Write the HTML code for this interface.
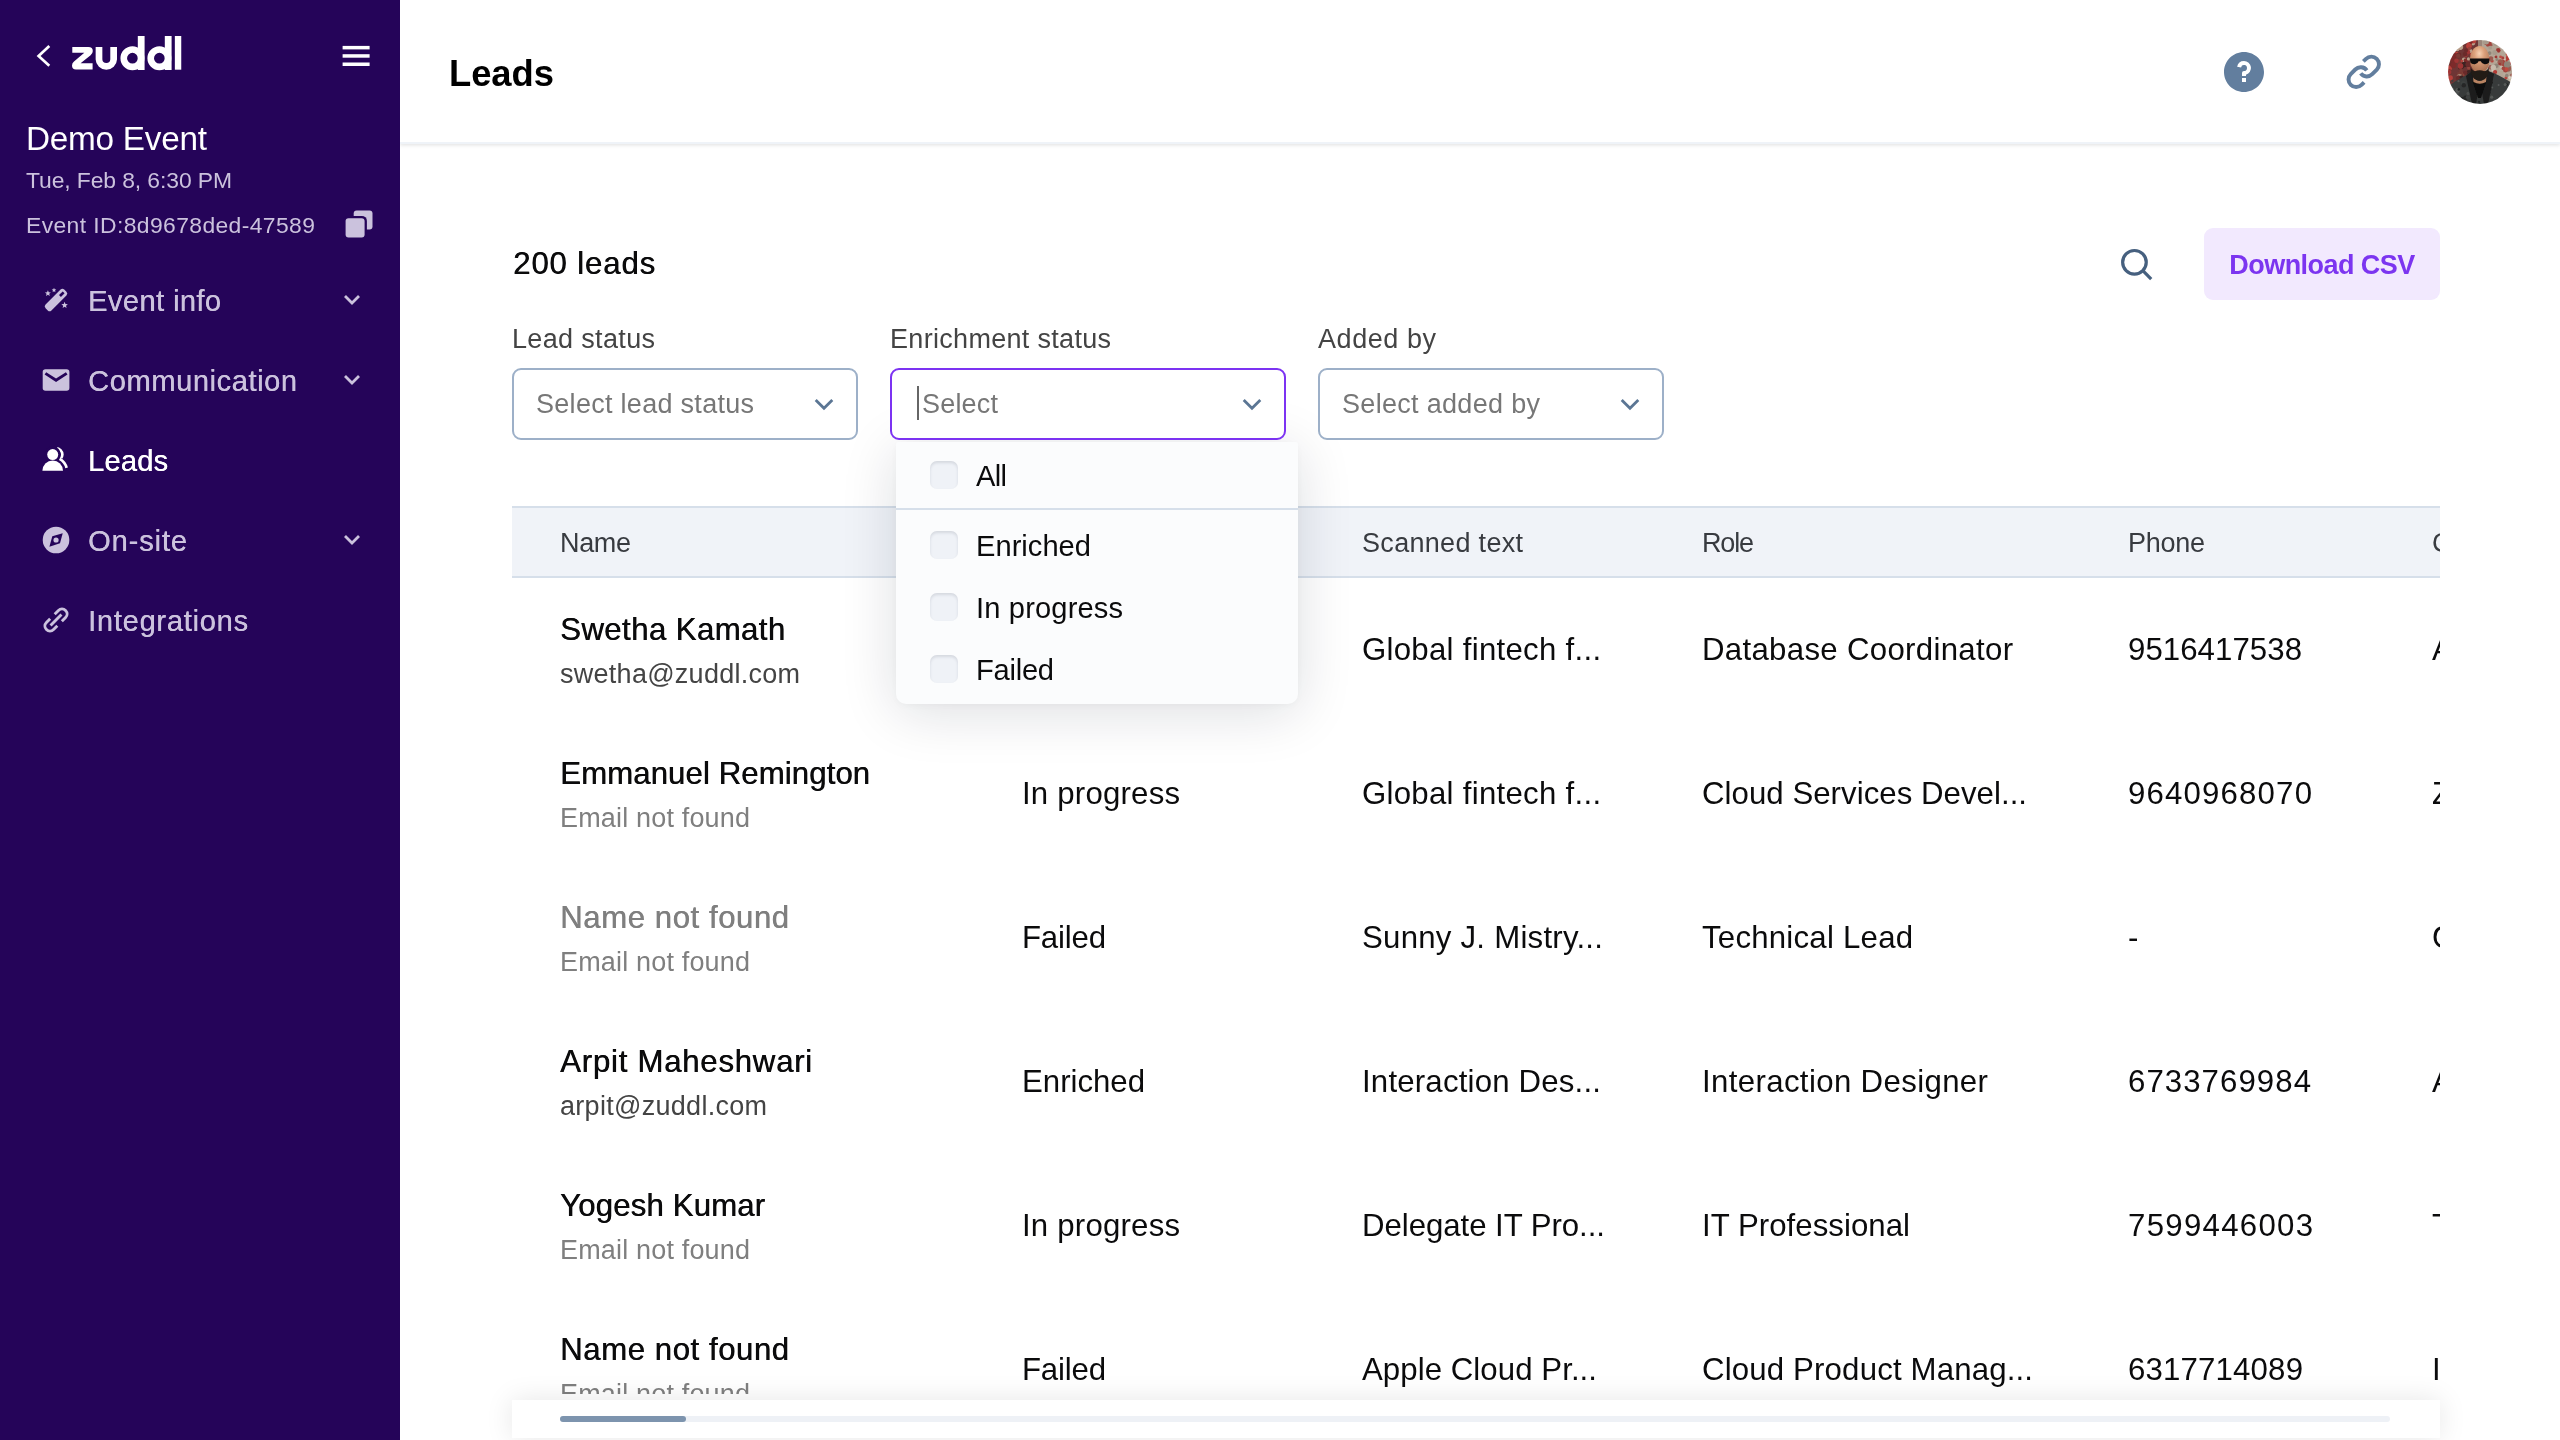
<!DOCTYPE html>
<html>
<head>
<meta charset="utf-8">
<title>Leads</title>
<style>
*{box-sizing:border-box;margin:0;padding:0}
html,body{width:2560px;height:1440px;overflow:hidden;background:#fff}
body{font-family:"Liberation Sans",sans-serif;color:#0b0b0c;position:relative}
.abs{position:absolute;white-space:nowrap;will-change:transform}
.sel span{will-change:transform}
/* sidebar */
#side{position:absolute;left:0;top:0;width:400px;height:1440px;background:#250459}
.ev1{left:26px;top:120px;font-size:33.3px;line-height:38px;color:#fff;letter-spacing:.3px}
.ev2{left:26px;top:167px;font-size:22.9px;line-height:26px;color:#cbc2dd;letter-spacing:.2px}
.ev3{left:26px;top:212px;font-size:22.9px;line-height:26px;color:#cbc2dd;letter-spacing:.2px}
.nav{text-shadow:0.3px 0 0 currentColor;left:88px;font-size:29.1px;line-height:34px;color:#cbc2dd;letter-spacing:.6px}
.nav.on{color:#fff}
.nico{position:absolute;left:40px;width:32px;height:32px}
.nchev{position:absolute;left:340px;width:24px;height:24px}
/* header */
#head{position:absolute;left:400px;top:0;width:2160px;height:144px;background:#fff;border-bottom:2px solid #eff3f8;box-shadow:0 1px 4px rgba(0,0,0,.13)}
.title{left:449px;top:53px;font-size:36.4px;line-height:42px;font-weight:bold;color:#000;letter-spacing:.2px}
/* content */
.count{text-shadow:0.5px 0 0 currentColor;left:513px;top:245.5px;font-size:31.2px;line-height:36px;color:#0b0b0c;letter-spacing:.5px}
.lbl{top:323px;font-size:27.0px;line-height:32px;color:#444;letter-spacing:.5px}
.sel{z-index:3;position:absolute;top:368px;height:72px;border:2px solid #9db0c8;border-radius:9px;background:#fff}
.sel.act{border-color:#7c33f2}
.sel span{position:absolute;left:22px;top:18px;font-size:27.0px;line-height:32px;color:#777;letter-spacing:.6px;white-space:nowrap}
.sel svg{position:absolute;right:20px;top:22px;width:24px;height:24px}
.btn{left:2204px;top:228px;width:236px;height:72px;border-radius:9px;background:#f2e9fe;color:#7c35f0;font-weight:bold;font-size:27.0px;line-height:75px;text-align:center;letter-spacing:.2px}
/* table */
#tbl{position:absolute;left:512px;top:506px;width:1928px;height:888px;overflow:hidden}
#thead{position:absolute;left:0;top:0;width:1928px;height:72px;background:#f0f3f8;border-top:2px solid #d6dfea;border-bottom:2px solid #d6dfea}
.th{top:19px;font-size:27.0px;line-height:32px;color:#383b40;letter-spacing:.5px}
.row{position:absolute;left:0;width:1928px;height:144px}
.c{font-size:31.2px;line-height:36px;color:#0b0b0c;top:54.5px;letter-spacing:.5px}
.nm{left:48px;top:35px;font-size:31.2px;line-height:36px;color:#0b0b0c;letter-spacing:.3px;text-shadow:0.5px 0 0 currentColor}
.em{left:48px;top:80.5px;font-size:27.0px;line-height:32px;color:#444;letter-spacing:.5px}
.gr{color:#7f7f7f}
/* dropdown */
#dd{position:absolute;left:896px;top:442px;width:402px;height:262px;background:#fbfcfd;border-radius:3px 3px 10px 10px;box-shadow:0 8px 56px rgba(15,20,40,.14),0 2px 10px rgba(15,20,40,.04)}
.cb{position:absolute;left:34px;width:28px;height:28px;border-radius:7px;background:#eff2f7;box-shadow:inset 0 2px 3px rgba(40,50,70,.13)}
.opt{left:80px;font-size:29.1px;line-height:34px;color:#0b0b0c;letter-spacing:.5px}
/* bottom scroll */
#sb{position:absolute;left:512px;top:1400px;width:1928px;height:38px;background:#fff;box-shadow:0 0 28px rgba(0,0,0,.10)}
</style>
</head>
<body>
<!-- TABLE -->
<div id="tbl">
  <div id="thead">
    <div class="abs th" style="left:48px;letter-spacing:-0.34px">Name</div>
    <div class="abs th" style="left:510px;letter-spacing:0.31px">Enrichment status</div>
    <div class="abs th" style="left:850px;letter-spacing:0.31px">Scanned text</div>
    <div class="abs th" style="left:1190px;letter-spacing:-1.18px">Role</div>
    <div class="abs th" style="left:1616px;letter-spacing:-0.27px">Phone</div>
    <div class="abs th" style="left:1920px">Company</div>
  </div>
  <div class="row" style="top:71px">
    <div class="abs nm" style="letter-spacing:0.4px">Swetha Kamath</div><div class="abs em" style="letter-spacing:0.27px">swetha@zuddl.com</div>
    <div class="abs c" style="left:510px;letter-spacing:-0.01px">Enriched</div>
    <div class="abs c" style="left:850px;letter-spacing:0.28px">Global fintech f...</div>
    <div class="abs c" style="left:1190px;letter-spacing:0.31px">Database Coordinator</div>
    <div class="abs c" style="left:1616px;letter-spacing:0.06px">9516417538</div>
    <div class="abs c" style="left:1920px">Apple</div>
  </div>
  <div class="row" style="top:215px">
    <div class="abs nm" style="letter-spacing:0.08px">Emmanuel Remington</div><div class="abs em gr" style="letter-spacing:0.17px">Email not found</div>
    <div class="abs c" style="left:510px;letter-spacing:0.2px">In progress</div>
    <div class="abs c" style="left:850px;letter-spacing:0.28px">Global fintech f...</div>
    <div class="abs c" style="left:1190px;letter-spacing:0.04px">Cloud Services Devel...</div>
    <div class="abs c" style="left:1616px;letter-spacing:1.17px">9640968070</div>
    <div class="abs c" style="left:1920px">Zuddl</div>
  </div>
  <div class="row" style="top:359px">
    <div class="abs nm gr" style="letter-spacing:0.54px">Name not found</div><div class="abs em gr" style="letter-spacing:0.17px">Email not found</div>
    <div class="abs c" style="left:510px;letter-spacing:-0.19px">Failed</div>
    <div class="abs c" style="left:850px;letter-spacing:0.24px">Sunny J. Mistry...</div>
    <div class="abs c" style="left:1190px;letter-spacing:0.23px">Technical Lead</div>
    <div class="abs c" style="left:1616px">-</div>
    <div class="abs c" style="left:1920px">Google</div>
  </div>
  <div class="row" style="top:503px">
    <div class="abs nm" style="letter-spacing:0.74px">Arpit Maheshwari</div><div class="abs em" style="letter-spacing:0.29px">arpit@zuddl.com</div>
    <div class="abs c" style="left:510px;letter-spacing:-0.01px">Enriched</div>
    <div class="abs c" style="left:850px;letter-spacing:0.19px">Interaction Des...</div>
    <div class="abs c" style="left:1190px;letter-spacing:0.36px">Interaction Designer</div>
    <div class="abs c" style="left:1616px;letter-spacing:1.06px">6733769984</div>
    <div class="abs c" style="left:1920px">Apple</div>
  </div>
  <div class="row" style="top:647px">
    <div class="abs nm" style="letter-spacing:0.14px">Yogesh Kumar</div><div class="abs em gr" style="letter-spacing:0.17px">Email not found</div>
    <div class="abs c" style="left:510px;letter-spacing:0.2px">In progress</div>
    <div class="abs c" style="left:850px;letter-spacing:-0.05px">Delegate IT Pro...</div>
    <div class="abs c" style="left:1190px;letter-spacing:0.04px">IT Professional</div>
    <div class="abs c" style="left:1616px;letter-spacing:1.28px">7599446003</div>
    <div class="abs c" style="left:1920px">Tesla</div>
  </div>
  <div class="row" style="top:791px">
    <div class="abs nm" style="letter-spacing:0.54px">Name not found</div><div class="abs em gr" style="letter-spacing:0.17px">Email not found</div>
    <div class="abs c" style="left:510px;letter-spacing:-0.19px">Failed</div>
    <div class="abs c" style="left:850px;letter-spacing:0.06px">Apple Cloud Pr...</div>
    <div class="abs c" style="left:1190px;letter-spacing:0.16px">Cloud Product Manag...</div>
    <div class="abs c" style="left:1616px;letter-spacing:0.17px">6317714089</div>
    <div class="abs c" style="left:1920px">IBM</div>
  </div>
</div>
<!-- bottom scrollbar -->
<div id="sb">
  <div style="position:absolute;left:48px;top:16px;width:1830px;height:6px;border-radius:3px;background:#eef1f6"></div>
  <div style="position:absolute;left:48px;top:16px;width:126px;height:6px;border-radius:3px;background:#7d94ae"></div>
</div>

<!-- CONTENT TOP -->
<div class="abs count" style="letter-spacing:0.84px">200 leads</div>
<svg class="abs" style="left:2116px;top:244px" width="40" height="40" viewBox="2116 244 40 40" fill="none" stroke="#46607f" stroke-width="3.2"><circle cx="2134.45" cy="262.3" r="11.8"/><path d="M2142.6 270.4 L2151.2 279.2"/></svg>
<div class="abs btn" style="letter-spacing:-0.55px">Download CSV</div>

<div class="abs lbl" style="left:512px;letter-spacing:0.34px">Lead status</div>
<div class="abs lbl" style="left:890px;letter-spacing:0.31px">Enrichment status</div>
<div class="abs lbl" style="left:1318px;letter-spacing:0.56px">Added by</div>

<div class="sel" style="left:512px;width:346px"><span style="letter-spacing:0.29px">Select lead status</span><svg viewBox="0 0 24 24" fill="none" stroke="#5b7694" stroke-width="2.8"><path d="M3.7 7.9 L12 16.2 L20.3 7.9"/></svg></div>
<div class="sel act" style="left:890px;width:396px"><span style="left:30px;letter-spacing:0.19px">Select</span><i style="position:absolute;left:25px;top:16px;width:2px;height:34px;background:#666"></i><svg viewBox="0 0 24 24" fill="none" stroke="#5b7694" stroke-width="2.8"><path d="M3.7 7.9 L12 16.2 L20.3 7.9"/></svg></div>
<div class="sel" style="left:1318px;width:346px"><span style="letter-spacing:0.31px">Select added by</span><svg viewBox="0 0 24 24" fill="none" stroke="#5b7694" stroke-width="2.8"><path d="M3.7 7.9 L12 16.2 L20.3 7.9"/></svg></div>

<!-- DROPDOWN -->
<div id="dd">
  <div class="cb" style="top:19px"></div><div class="abs opt" style="top:17px;letter-spacing:-0.67px">All</div>
  <div style="position:absolute;left:0;top:66px;width:402px;height:2px;background:#d6dfea"></div>
  <div class="cb" style="top:89px"></div><div class="abs opt" style="top:87px;letter-spacing:0.02px">Enriched</div>
  <div class="cb" style="top:151px"></div><div class="abs opt" style="top:149px;letter-spacing:0.15px">In progress</div>
  <div class="cb" style="top:213px"></div><div class="abs opt" style="top:211px;letter-spacing:-0.25px">Failed</div>
</div>

<!-- HEADER -->
<div id="head"></div>
<div class="abs title" style="letter-spacing:-0.05px">Leads</div>

<!-- SIDEBAR -->
<div id="side"></div>
<div class="abs ev1" style="letter-spacing:-0.25px">Demo Event</div>
<div class="abs ev2" style="letter-spacing:-0.1px">Tue, Feb 8, 6:30 PM</div>
<div class="abs ev3" style="letter-spacing:0.39px">Event ID:8d9678ded-47589</div>
<div class="abs nav" style="top:284px;letter-spacing:0.4px">Event info</div>
<div class="abs nav" style="top:364px;letter-spacing:0.57px">Communication</div>
<div class="abs nav on" style="top:444px;letter-spacing:0.18px">Leads</div>
<div class="abs nav" style="top:524px;letter-spacing:0.87px">On-site</div>
<div class="abs nav" style="top:604px;letter-spacing:0.72px">Integrations</div>
<!-- SIDEBAR ICONS -->
<svg class="abs" style="left:0;top:0" width="400" height="700" viewBox="0 0 400 700">
  <!-- back chevron -->
  <path d="M49.3 46 L38.6 56 L49.3 65.8" fill="none" stroke="#fff" stroke-width="2.7"/>
  <!-- zuddl logo -->
  <g fill="#fff">
    <path d="M72.3 47 H88.4 Q92.8 47 92.8 51 Q92.8 53.6 90.6 55.2 L80.6 63.3 H92.6 V69.5 H76 Q72 69.5 72 65.6 Q72 63 74 61.4 L84.3 52.7 H72.3 Z"/>
  </g>
  <g fill="none" stroke="#fff">
    <path d="M99 47 V59.3 A7.33 7.33 0 0 0 113.65 59.3 V47" stroke-width="6.7"/>
    <circle cx="132.45" cy="58.2" r="8.7" stroke-width="6.6"/>
    <path d="M141.2 36 V70" stroke-width="6.8"/>
    <circle cx="159.4" cy="58.2" r="8.7" stroke-width="6.6"/>
    <path d="M168.2 36 V70" stroke-width="6.8"/>
    <path d="M178.05 36 V69.7" stroke-width="6.4"/>
  </g>
  <!-- hamburger -->
  <g fill="#fff"><rect x="342.6" y="45.9" width="27" height="3.5"/><rect x="342.6" y="54.2" width="27" height="3.5"/><rect x="342.6" y="62.5" width="27" height="3.5"/></g>
  <!-- copy -->
  <rect x="353.7" y="210.5" width="18.8" height="18.9" rx="2.9" fill="#cbc2dd"/>
  <rect x="343.3" y="215.9" width="23.6" height="23.9" rx="5" fill="#250459"/>
  <rect x="345.6" y="218.2" width="19" height="19.3" rx="2.9" fill="#cbc2dd"/>
  <!-- wand -->
  <g transform="translate(56 300) rotate(-45)"><rect x="-13.2" y="-4.15" width="26.4" height="8.3" rx="2.6" fill="#cbc2dd"/><rect x="5.6" y="-1.35" width="5.2" height="2.7" fill="#250459"/></g>
  <polygon points="47.90,290.30 48.72,292.27 50.85,292.44 49.23,293.83 49.72,295.91 47.90,294.80 46.08,295.91 46.57,293.83 44.95,292.44 47.08,292.27" fill="#cbc2dd"/>
  <polygon points="54.00,287.80 54.65,289.31 56.28,289.46 55.05,290.54 55.41,292.14 54.00,291.30 52.59,292.14 52.95,290.54 51.72,289.46 53.35,289.31" fill="#cbc2dd"/>
  <polygon points="64.60,301.80 65.48,303.99 67.83,304.15 66.03,305.66 66.60,307.95 64.60,306.70 62.60,307.95 63.17,305.66 61.37,304.15 63.72,303.99" fill="#cbc2dd"/>
  <!-- mail -->
  <rect x="42.7" y="369.2" width="26.7" height="21.6" rx="2.8" fill="#cbc2dd"/>
  <path d="M45.4 373.4 L56.04 380.3 L66.7 373.4" fill="none" stroke="#250459" stroke-width="2.9"/>
  <!-- leads (active, white) -->
  <circle cx="56.1" cy="454.6" r="6.2" fill="none" stroke="#fff" stroke-width="2.8"/>
  <rect x="40" y="444" width="17.2" height="22" fill="#250459"/>
  <circle cx="52.7" cy="454.6" r="8.1" fill="#250459"/>
  <rect x="50" y="458.4" width="12" height="6" fill="#250459"/>
  <path d="M59.6 458.9 A14.2 14.2 0 0 1 66.6 467.9" fill="none" stroke="#fff" stroke-width="2.7"/>
  <circle cx="52.7" cy="454.6" r="5.5" fill="#fff"/>
  <path d="M42.4 470.8 A10.3 10.3 0 0 1 63 470.8 Z" fill="#fff"/>
  <!-- on-site compass -->
  <circle cx="56.04" cy="540" r="13.3" fill="#cbc2dd"/>
  <polygon points="62.7,533.3 60,543.3 49.4,546.7 52.3,536.3" fill="#250459"/>
  <circle cx="56.04" cy="540" r="2.6" fill="#cbc2dd"/>
  <!-- integrations link -->
  <g transform="translate(56 620) rotate(-45)" fill="none" stroke="#cbc2dd" stroke-width="2.9">
    <path d="M3.2 -5.05 H8.5 A5.05 5.05 0 0 1 8.5 5.05 H3.2"/>
    <path d="M-3.2 -5.05 H-8.5 A5.05 5.05 0 0 0 -8.5 5.05 H-3.2"/>
    <path d="M-7.7 0 H7.7"/>
  </g>
  <!-- nav chevrons -->
  <g fill="none" stroke="#cbc2dd" stroke-width="2.8">
    <path d="M345 296 L352 303 L359 296"/>
    <path d="M345 376 L352 383 L359 376"/>
    <path d="M345 536 L352 543 L359 536"/>
  </g>
</svg>
<!-- HEADER ICONS -->
<svg class="abs" style="left:2200px;top:28px" width="340" height="90" viewBox="2200 28 340 90">
  <g transform="translate(2220 48) scale(2)"><path fill="#627e9e" d="M12 22C6.477 22 2 17.523 2 12S6.477 2 12 2s10 4.477 10 10-4.477 10-10 10zm-1-7v2h2v-2h-2zm2-1.645A3.502 3.502 0 0 0 12 6.5a3.501 3.501 0 0 0-3.433 2.813l1.962.393A1.5 1.5 0 1 1 12 11.5a1 1 0 0 0-1 1V14h2v-.645z"/></g>
  <g transform="translate(2345.4 53.5) scale(1.53)" fill="none" stroke="#627e9e" stroke-width="2.55"><path d="M10 13a5 5 0 0 0 7.54.54l3-3a5 5 0 0 0-7.07-7.07l-1.72 1.71"/><path d="M14 11a5 5 0 0 0-7.54-.54l-3 3a5 5 0 0 0 7.07 7.07l1.71-1.71"/></g>
</svg>
<!-- AVATAR (abstract) -->
<svg class="abs" style="left:2448px;top:40px" width="64" height="64" viewBox="0 0 64 64">
  <defs><clipPath id="avc"><circle cx="32" cy="32" r="32"/></clipPath>
  <radialGradient id="skin" cx="0.48" cy="0.28" r="0.7"><stop offset="0" stop-color="#f6d2b4"/><stop offset="0.35" stop-color="#dca27c"/><stop offset="1" stop-color="#a86f50"/></radialGradient>
  <filter id="avb" x="-5%" y="-5%" width="110%" height="110%"><feGaussianBlur stdDeviation="0.7"/></filter></defs>
  <g clip-path="url(#avc)">
    <g filter="url(#avb)">
    <rect width="64" height="64" fill="#9a8478"/>
    <rect x="0" y="0" width="30" height="44" fill="#6e3634"/>
    <rect x="34" y="0" width="30" height="44" fill="#b3a595"/>
    <circle cx="8.4" cy="6.0" r="2.5" fill="#a03434"/><circle cx="21.4" cy="3.8" r="2.4" fill="#3c2422"/><circle cx="1.0" cy="17.3" r="1.3" fill="#a03434"/><circle cx="14.3" cy="2.4" r="2.3" fill="#3c2422"/><circle cx="16.4" cy="23.3" r="1.3" fill="#7a3a34"/><circle cx="1.3" cy="8.8" r="2.3" fill="#6b2a2a"/><circle cx="7.5" cy="5.8" r="1.4" fill="#94443c"/><circle cx="14.6" cy="27.3" r="1.4" fill="#3c2422"/><circle cx="9.7" cy="21.9" r="1.3" fill="#7d2a2a"/><circle cx="16.1" cy="19.9" r="2.3" fill="#b9a08c"/><circle cx="12.1" cy="36.9" r="1.9" fill="#3c2422"/><circle cx="20.7" cy="28.0" r="1.7" fill="#94443c"/><circle cx="13.7" cy="35.0" r="2.7" fill="#94443c"/><circle cx="15.8" cy="2.9" r="2.2" fill="#6b2a2a"/><circle cx="19.7" cy="6.1" r="2.2" fill="#7d2a2a"/><circle cx="25.0" cy="3.1" r="2.3" fill="#b9a08c"/><circle cx="8.8" cy="14.0" r="2.2" fill="#b8403a"/><circle cx="1.8" cy="3.7" r="1.7" fill="#a03434"/><circle cx="1.6" cy="28.1" r="2.5" fill="#b8403a"/><circle cx="7.4" cy="15.4" r="2.5" fill="#7d2a2a"/><circle cx="24.5" cy="14.2" r="2.4" fill="#b8403a"/><circle cx="1.5" cy="30.7" r="1.5" fill="#3c2422"/><circle cx="10.3" cy="36.7" r="2.2" fill="#6b2a2a"/><circle cx="11.7" cy="22.0" r="3.0" fill="#7a3a34"/><circle cx="22.5" cy="11.1" r="2.0" fill="#b9a08c"/><circle cx="17.8" cy="15.2" r="1.7" fill="#a03434"/><circle cx="4.6" cy="9.3" r="1.7" fill="#b8403a"/><circle cx="21.6" cy="7.3" r="1.8" fill="#6b2a2a"/><circle cx="10.9" cy="14.8" r="2.3" fill="#6b2a2a"/><circle cx="18.0" cy="20.6" r="2.4" fill="#7d2a2a"/><circle cx="11.9" cy="34.8" r="3.1" fill="#7a3a34"/><circle cx="10.3" cy="15.8" r="2.2" fill="#7a3a34"/><circle cx="1.6" cy="2.7" r="1.6" fill="#6b2a2a"/><circle cx="2.9" cy="24.0" r="1.4" fill="#6b2a2a"/><circle cx="14.0" cy="38.0" r="2.4" fill="#a03434"/><circle cx="22.7" cy="24.6" r="1.5" fill="#94443c"/><circle cx="24.8" cy="24.1" r="2.1" fill="#a03434"/><circle cx="22.1" cy="39.7" r="2.1" fill="#b8403a"/><circle cx="8.1" cy="5.8" r="2.7" fill="#94443c"/><circle cx="12.4" cy="27.7" r="2.2" fill="#3c2422"/><circle cx="24.7" cy="21.1" r="1.5" fill="#7d2a2a"/><circle cx="19.7" cy="11.9" r="2.5" fill="#a03434"/><circle cx="18.1" cy="10.4" r="1.9" fill="#6b2a2a"/><circle cx="9.2" cy="8.9" r="2.3" fill="#b9a08c"/><circle cx="16.5" cy="24.5" r="2.8" fill="#3c2422"/><circle cx="21.0" cy="32.7" r="2.7" fill="#3c2422"/><circle cx="5.2" cy="19.7" r="2.7" fill="#7d2a2a"/><circle cx="20.5" cy="18.9" r="1.6" fill="#b9a08c"/><circle cx="11.6" cy="37.5" r="3.2" fill="#b9a08c"/><circle cx="2.1" cy="4.1" r="2.1" fill="#b9a08c"/><circle cx="5.3" cy="25.0" r="3.0" fill="#7d2a2a"/><circle cx="12.5" cy="26.1" r="2.8" fill="#a03434"/><circle cx="21.7" cy="4.8" r="2.0" fill="#3c2422"/><circle cx="12.4" cy="7.1" r="2.8" fill="#b9a08c"/><circle cx="2.3" cy="37.8" r="2.6" fill="#b8403a"/><circle cx="10.4" cy="37.9" r="2.6" fill="#6b2a2a"/><circle cx="25.8" cy="1.1" r="2.4" fill="#b8403a"/><circle cx="21.0" cy="5.8" r="2.9" fill="#b8403a"/><circle cx="17.1" cy="14.0" r="2.3" fill="#6b2a2a"/><circle cx="0.6" cy="32.0" r="2.7" fill="#a03434"/><circle cx="13.7" cy="37.3" r="2.1" fill="#3c2422"/><circle cx="21.5" cy="8.4" r="1.7" fill="#94443c"/><circle cx="13.0" cy="30.5" r="1.9" fill="#7a3a34"/><circle cx="21.7" cy="2.4" r="2.7" fill="#b8403a"/><circle cx="17.2" cy="32.6" r="2.2" fill="#6b2a2a"/><circle cx="13.8" cy="20.9" r="1.2" fill="#b8403a"/><circle cx="20.2" cy="24.3" r="2.8" fill="#6b2a2a"/><circle cx="4.5" cy="18.9" r="2.7" fill="#7d2a2a"/><circle cx="8.5" cy="20.7" r="2.3" fill="#a03434"/><circle cx="23.0" cy="2.3" r="1.6" fill="#7d2a2a"/><circle cx="57.6" cy="21.3" r="2.4" fill="#a89b8c"/><circle cx="48.4" cy="25.7" r="2.3" fill="#8f8478"/><circle cx="55.4" cy="19.0" r="2.4" fill="#d6cbbd"/><circle cx="50.2" cy="10.4" r="2.4" fill="#a4443e"/><circle cx="61.8" cy="37.5" r="1.6" fill="#d6cbbd"/><circle cx="39.8" cy="5.1" r="2.2" fill="#a89b8c"/><circle cx="54.8" cy="18.0" r="1.7" fill="#a4443e"/><circle cx="58.0" cy="37.7" r="1.5" fill="#b8423a"/><circle cx="40.0" cy="37.1" r="3.3" fill="#8f8478"/><circle cx="56.9" cy="4.0" r="3.1" fill="#c7bbac"/><circle cx="63.7" cy="35.0" r="1.6" fill="#9c5a50"/><circle cx="63.8" cy="17.0" r="2.1" fill="#b8423a"/><circle cx="44.9" cy="30.3" r="1.2" fill="#d6cbbd"/><circle cx="48.3" cy="0.8" r="1.9" fill="#a4443e"/><circle cx="50.3" cy="2.7" r="3.4" fill="#8f8478"/><circle cx="63.2" cy="4.4" r="1.8" fill="#b9ab9b"/><circle cx="61.4" cy="7.6" r="2.9" fill="#9c5a50"/><circle cx="59.8" cy="28.4" r="3.3" fill="#9c5a50"/><circle cx="40.2" cy="38.6" r="2.5" fill="#b8423a"/><circle cx="38.5" cy="2.4" r="2.7" fill="#9c5a50"/><circle cx="61.1" cy="11.3" r="1.2" fill="#a89b8c"/><circle cx="58.4" cy="3.5" r="3.1" fill="#a89b8c"/><circle cx="43.4" cy="5.1" r="1.2" fill="#9c5a50"/><circle cx="61.9" cy="11.3" r="1.5" fill="#8f8478"/><circle cx="62.3" cy="40.7" r="1.8" fill="#c7bbac"/><circle cx="41.6" cy="13.1" r="1.9" fill="#8f8478"/><circle cx="44.1" cy="21.0" r="1.6" fill="#b8423a"/><circle cx="58.5" cy="41.8" r="1.3" fill="#b9ab9b"/><circle cx="56.5" cy="23.1" r="1.6" fill="#d6cbbd"/><circle cx="42.9" cy="18.8" r="2.6" fill="#9c5a50"/><circle cx="54.4" cy="22.9" r="3.2" fill="#a4443e"/><circle cx="55.3" cy="41.3" r="2.0" fill="#c7bbac"/><circle cx="47.3" cy="14.6" r="1.3" fill="#c7bbac"/><circle cx="36.4" cy="26.3" r="3.1" fill="#9c5a50"/><circle cx="40.6" cy="3.5" r="3.1" fill="#a4443e"/><circle cx="52.8" cy="29.1" r="1.3" fill="#c7bbac"/><circle cx="40.4" cy="18.7" r="1.8" fill="#b8423a"/><circle cx="63.2" cy="23.0" r="1.7" fill="#a4443e"/><circle cx="42.1" cy="7.7" r="1.9" fill="#a89b8c"/><circle cx="49.3" cy="21.1" r="1.6" fill="#b9ab9b"/><circle cx="38.5" cy="34.3" r="1.5" fill="#b9ab9b"/><circle cx="47.0" cy="12.6" r="2.6" fill="#a89b8c"/><circle cx="52.4" cy="22.2" r="2.9" fill="#9c5a50"/><circle cx="57.4" cy="30.3" r="2.3" fill="#a4443e"/><circle cx="56.3" cy="27.0" r="1.3" fill="#9c5a50"/><circle cx="56.5" cy="34.1" r="1.5" fill="#b9ab9b"/><circle cx="59.1" cy="24.5" r="3.2" fill="#8f8478"/><circle cx="38.4" cy="1.8" r="2.6" fill="#a89b8c"/><circle cx="46.5" cy="19.0" r="1.3" fill="#b9ab9b"/><circle cx="53.5" cy="28.6" r="2.3" fill="#b9ab9b"/><circle cx="48.8" cy="2.9" r="3.3" fill="#a89b8c"/><circle cx="54.5" cy="2.8" r="2.8" fill="#a4443e"/><circle cx="58.7" cy="35.5" r="1.7" fill="#8f8478"/><circle cx="42.5" cy="27.3" r="2.2" fill="#9c5a50"/><circle cx="38.1" cy="38.2" r="1.8" fill="#b9ab9b"/><circle cx="53.3" cy="27.0" r="1.4" fill="#c7bbac"/><circle cx="45.3" cy="27.4" r="2.7" fill="#c7bbac"/><circle cx="36.3" cy="2.5" r="1.8" fill="#a89b8c"/><circle cx="55.4" cy="28.4" r="1.8" fill="#a4443e"/><circle cx="49.0" cy="19.6" r="1.5" fill="#8f8478"/><circle cx="50.4" cy="10.2" r="1.7" fill="#9c3430"/><circle cx="59.9" cy="18.1" r="2.3" fill="#b23a34"/><circle cx="59.3" cy="11.4" r="2.1" fill="#c04a40"/><circle cx="58.6" cy="20.6" r="1.0" fill="#b23a34"/><circle cx="48.0" cy="16.9" r="1.4" fill="#9c3430"/><circle cx="59.2" cy="13.1" r="1.0" fill="#c04a40"/><circle cx="47.1" cy="32.1" r="2.1" fill="#b23a34"/><circle cx="59.1" cy="14.5" r="1.4" fill="#c04a40"/><circle cx="58.4" cy="29.1" r="1.9" fill="#c04a40"/><circle cx="51.8" cy="24.0" r="1.2" fill="#9c3430"/><circle cx="52.6" cy="16.9" r="1.4" fill="#c04a40"/>
    <!-- jacket -->
    <path d="M-2 48 Q8 40 18.6 35 L24 31 H40 L46 33 Q56 38 66 44 V66 H-2 Z" fill="#383b3a"/>
    <circle cx="20.1" cy="53.4" r="1.6" fill="#4b4e4d"/><circle cx="40.6" cy="41.8" r="1.8" fill="#555857"/><circle cx="35.0" cy="50.9" r="1.5" fill="#555857"/><circle cx="27.6" cy="53.1" r="1.4" fill="#4b4e4d"/><circle cx="22.5" cy="42.2" r="1.4" fill="#262828"/><circle cx="50.6" cy="44.9" r="1.0" fill="#555857"/><circle cx="25.0" cy="57.9" r="1.3" fill="#262828"/><circle cx="22.3" cy="41.5" r="1.4" fill="#262828"/><circle cx="9.6" cy="52.1" r="2.0" fill="#4b4e4d"/><circle cx="7.6" cy="61.5" r="1.6" fill="#555857"/><circle cx="27.9" cy="47.5" r="2.3" fill="#3d403f"/><circle cx="9.6" cy="50.2" r="2.2" fill="#555857"/><circle cx="60.1" cy="51.8" r="1.1" fill="#1f2121"/><circle cx="53.3" cy="63.3" r="1.4" fill="#3d403f"/><circle cx="15.4" cy="43.6" r="2.6" fill="#3d403f"/><circle cx="58.5" cy="57.3" r="2.0" fill="#555857"/><circle cx="7.1" cy="58.6" r="1.0" fill="#4b4e4d"/><circle cx="16.0" cy="62.1" r="2.0" fill="#262828"/><circle cx="59.7" cy="55.0" r="1.8" fill="#555857"/><circle cx="43.9" cy="42.7" r="1.1" fill="#1f2121"/><circle cx="58.6" cy="44.6" r="1.4" fill="#1f2121"/><circle cx="2.1" cy="52.9" r="2.6" fill="#262828"/><circle cx="59.5" cy="55.5" r="2.4" fill="#555857"/><circle cx="33.6" cy="53.1" r="1.0" fill="#555857"/><circle cx="44.3" cy="47.4" r="1.0" fill="#555857"/><circle cx="55.1" cy="55.5" r="1.1" fill="#4b4e4d"/><circle cx="42.0" cy="62.2" r="1.4" fill="#3d403f"/><circle cx="43.7" cy="57.2" r="1.6" fill="#555857"/><circle cx="13.9" cy="59.1" r="2.2" fill="#1f2121"/><circle cx="6.0" cy="51.9" r="1.3" fill="#4b4e4d"/><circle cx="15.8" cy="45.3" r="2.2" fill="#262828"/><circle cx="8.5" cy="55.0" r="2.0" fill="#4b4e4d"/><circle cx="31.1" cy="61.8" r="1.1" fill="#1f2121"/><circle cx="10.8" cy="49.4" r="1.3" fill="#1f2121"/><circle cx="10.5" cy="41.2" r="1.1" fill="#555857"/><circle cx="29.0" cy="57.1" r="1.5" fill="#3d403f"/><circle cx="61.9" cy="62.4" r="1.5" fill="#4b4e4d"/><circle cx="41.1" cy="52.6" r="1.7" fill="#262828"/><circle cx="41.9" cy="49.1" r="1.6" fill="#262828"/><circle cx="28.5" cy="42.6" r="1.1" fill="#3d403f"/><circle cx="23.1" cy="62.9" r="1.2" fill="#4b4e4d"/><circle cx="24.8" cy="58.4" r="1.5" fill="#555857"/><circle cx="7.3" cy="56.9" r="1.3" fill="#1f2121"/><circle cx="57.2" cy="44.6" r="1.6" fill="#555857"/><circle cx="3.8" cy="49.9" r="2.3" fill="#555857"/><circle cx="4.4" cy="40.8" r="1.1" fill="#3d403f"/><circle cx="17.4" cy="57.9" r="2.4" fill="#262828"/><circle cx="23.8" cy="48.0" r="2.5" fill="#3d403f"/><circle cx="17.7" cy="57.2" r="1.5" fill="#262828"/><circle cx="19.8" cy="57.3" r="2.0" fill="#3d403f"/>
    <!-- collar / shirt -->
    <path d="M18 36 L24 31 L31 47 L28 64 H24 Z" fill="#1b1c1c"/>
    <path d="M46 34 L40 31 L33 47 L36 64 H40 Z" fill="#1b1c1c"/>
    <path d="M24.5 41 Q31.5 45 38.5 41 L33 58 H30 Z" fill="#0e0e0e"/>
    <!-- neck -->
    <path d="M25 36 Q31.7 46 38.5 36 L38 42 Q31.7 45.5 25.5 42 Z" fill="#b98462"/>
    <!-- head -->
    <ellipse cx="31.7" cy="19.5" rx="9.9" ry="13.6" fill="url(#skin)"/>
    <!-- beard -->
    <path d="M22.6 27 Q24 31 27 31.2 Q31.7 29.4 36.4 31.2 Q39.6 31 40.8 27 Q41.2 35 37 39 Q31.7 42.5 26.4 39 Q22.2 35 22.6 27 Z" fill="#231a16"/>
    <!-- glasses -->
    <path d="M21.8 18.4 H41.6 L41 22.6 Q39.6 24.4 36.6 24.2 Q33.6 23.8 32.8 21.2 H30.6 Q29.8 23.8 26.8 24.2 Q23.8 24.4 22.4 22.6 Z" fill="#0b0b0d"/>
    </g>
  </g>
</svg>
</body>
</html>
